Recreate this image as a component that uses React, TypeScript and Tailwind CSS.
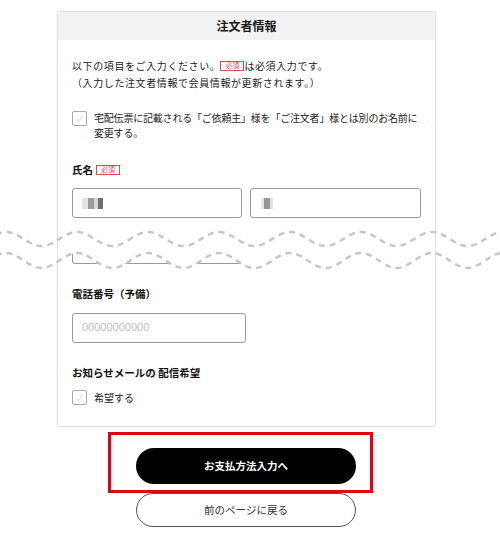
import React from "react";

const FONT = { fontFamily: '"Noto Sans CJK JP", "Noto Sans", sans-serif' };

function wavePoints(c: number, a: number, dir: 1 | -1) {
  const pts: string[] = [];
  const P = 71;
  const X0 = 77;
  if (dir === 1) {
    for (let x = -4; x <= 504; x += 1) {
      const y = c - a * Math.cos((2 * Math.PI * (x - X0)) / P);
      pts.push(`${x},${y.toFixed(2)}`);
    }
  } else {
    for (let x = 504; x >= -4; x -= 1) {
      const y = c - a * Math.cos((2 * Math.PI * (x - X0)) / P);
      pts.push(`${x},${y.toFixed(2)}`);
    }
  }
  return pts;
}

function Waves() {
  const up = wavePoints(14, 7, 1);
  const low = wavePoints(35.5, 7.5, 1);
  const lowRev = wavePoints(35.5, 7.5, -1);
  const fill = "M" + up.join(" L") + " L" + lowRev.join(" L") + " Z";
  return (
    <svg
      className="absolute left-0 top-[225px]"
      width="500"
      height="50"
      viewBox="0 0 500 50"
    >
      <path d={fill} fill="#ffffff" />
      <line x1="57.5" y1="0" x2="57.5" y2="50" stroke="#e0e0e0" strokeWidth="1" />
      <line x1="435.5" y1="0" x2="435.5" y2="50" stroke="#e0e0e0" strokeWidth="1" />
      <path
        d={"M" + up.join(" L")}
        fill="none"
        stroke="#c6c6c6"
        strokeWidth="2.5"
        strokeDasharray="6 5"
      />
      <path
        d={"M" + low.join(" L")}
        fill="none"
        stroke="#c6c6c6"
        strokeWidth="2.5"
        strokeDasharray="6 5"
      />
    </svg>
  );
}

function Badge() {
  return (
    <span className="inline-flex h-[10px] w-[24px] items-center justify-center border border-[#e2474f] text-[7px] leading-none tracking-normal text-[#e2474f]">
      必須
    </span>
  );
}

function Check() {
  return (
    <span className="flex h-[15px] w-[15px] shrink-0 items-center justify-center rounded-[2px] border border-[#a8a8a8] bg-white">
      <svg width="11" height="11" viewBox="0 0 11 11">
        <path d="M2 6 L4.5 8.5 L9 2.5" fill="none" stroke="#e6e6e6" strokeWidth="1.3" />
      </svg>
    </span>
  );
}

export default function App() {
  return (
    <div className="relative h-[548px] w-[500px] overflow-hidden bg-white text-[#222]" style={FONT}>
      <div className="ml-[57px] mt-[11px] w-[379px] overflow-hidden rounded-[3px] border border-[#e0e0e0] shadow-[0_0_2px_rgba(0,0,0,0.1)]">
        <div className="flex h-[28px] items-center justify-center bg-[#f2f2f2] text-[12px] font-bold text-[#1a1a1a]">
          注文者情報
        </div>
        <div className="flex flex-col pl-[14px] pr-[10px] pb-[21px]">
          <div className="mt-[17px] text-[10px] leading-[17px] tracking-[0.6px]">
            <div className="flex items-center whitespace-nowrap">
              <span>以下の項目をご入力ください。</span>
              <Badge />
              <span>は必須入力です。</span>
            </div>
            <div>（入力した注文者情報で会員情報が更新されます。）</div>
          </div>
          <div className="mt-[19px] flex items-start gap-[7px]">
            <div className="mt-[0.5px]">
              <Check />
            </div>
            <div className="whitespace-nowrap text-[10px] leading-[15px] tracking-[-0.2px]">
              宅配伝票に記載される「ご依頼主」様を「ご注文者」様とは別のお名前に
              <br />
              変更する。
            </div>
          </div>
          <div className="mt-[21.5px] flex h-[16px] items-center gap-[3px]">
            <span className="text-[10.5px] font-bold text-[#111]">氏名</span>
            <Badge />
          </div>
          <div className="mt-[10px] flex gap-[8px]">
            <div className="relative h-[30px] w-[170px] rounded-[3px] border-[1.5px] border-[#9a9a9a]">
              <div className="absolute left-[9px] top-[9px] flex h-[11px]">
                <div className="w-[6px] bg-[#e4e4e4]" />
                <div className="w-[6px] bg-[#9c9c9c]" />
                <div className="w-[4px] bg-[#d8d8d8]" />
                <div className="w-[5px] bg-[#6f6f6f]" />
              </div>
            </div>
            <div className="relative h-[30px] w-[171px] rounded-[3px] border-[1.5px] border-[#9a9a9a]">
              <div className="absolute left-[10px] top-[9px] flex h-[11px]">
                <div className="w-[3px] bg-[#e6e6e6]" />
                <div className="w-[6px] bg-[#979797]" />
                <div className="w-[3px] bg-[#e2e2e2]" />
              </div>
            </div>
          </div>
          <div className="mt-[31px] h-[15px] w-[170px] rounded-b-[3px] border-x-[1.5px] border-b-[1.5px] border-[#9a9a9a]" />
          <div className="mt-[22px] flex h-[16px] items-center text-[10.5px] font-bold text-[#111]">
            電話番号（予備）
          </div>
          <div className="mt-[11px] flex h-[30px] w-[174px] items-center rounded-[3px] border-[1.5px] border-[#9a9a9a] pl-[9px]">
            <span className="text-[11px] text-[#bdbdbd]" style={{ fontFamily: '"Liberation Sans", Arial, sans-serif' }}>
              00000000000
            </span>
          </div>
          <div className="mt-[22px] flex h-[16px] items-center text-[10.5px] font-bold text-[#111]">
            お知らせメールの 配信希望
          </div>
          <div className="mt-[9.5px] flex items-center gap-[7px]">
            <Check />
            <span className="text-[10px] leading-[15px]">希望する</span>
          </div>
        </div>
      </div>

      <div className="ml-[136px] mt-[21px] flex w-[220px] flex-col gap-[9px]">
        <div className="flex h-[36px] items-center justify-center rounded-full bg-black text-[10.5px] font-bold text-white">
          お支払方法入力へ
        </div>
        <div className="flex h-[34px] items-center justify-center rounded-full border border-[#555] bg-white text-[10.5px] text-[#333]">
          前のページに戻る
        </div>
      </div>

      <Waves />

      <div className="absolute left-[108px] top-[432px] h-[61px] w-[265px] border-[3px] border-[#e60012]" />
    </div>
  );
}
